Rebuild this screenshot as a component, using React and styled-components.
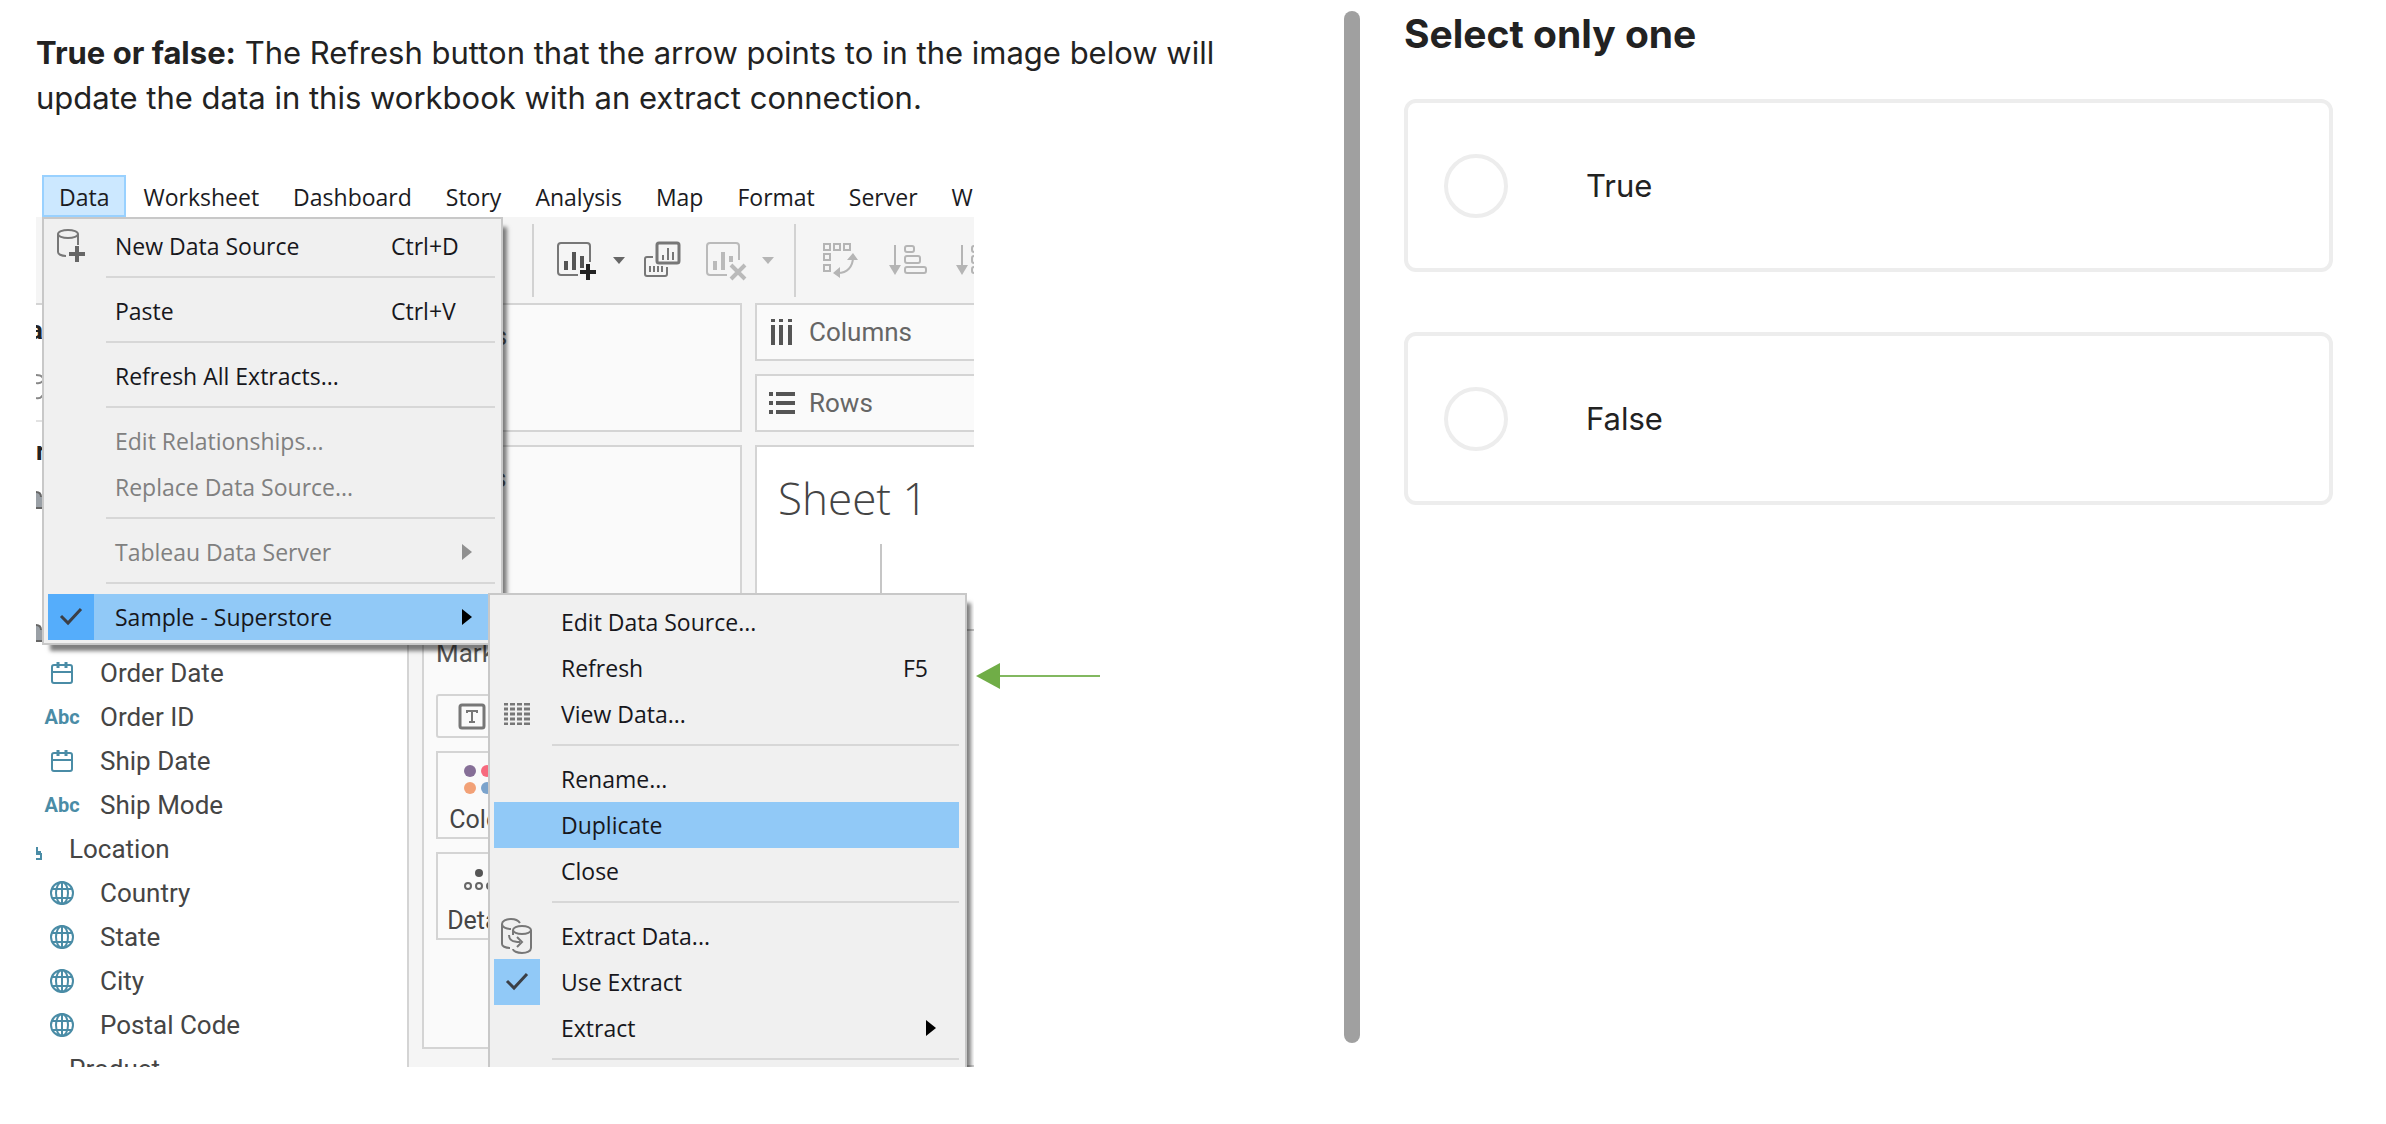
import React, { useState } from "react";
import styled, { createGlobalStyle } from "styled-components";

const GlobalStyle = createGlobalStyle`
  *, *::before, *::after { box-sizing: border-box; }
  body {
    margin: 0;
    background: #fff;
    color: #222;
    font-family: Inter, "Liberation Sans", sans-serif;
  }
`;

/* ---------- Page ---------- */

const Page = styled.main`
  display: grid;
  grid-template-columns: minmax(0, 1344fr) 16px minmax(0, 1026fr);
  min-height: 100vh;
`;

const Question = styled.section`
  padding: 30px 84px 30px 36px;
`;

const Prompt = styled.p`
  margin: 0 0 55px;
  font-size: 31px;
  line-height: 45px;
`;

const Divider = styled.div`
  margin: 11px 0 81px;
  border-radius: 8px;
  background: #a0a0a0;
`;

const Answers = styled.form`
  padding: 10px 53px 30px 44px;
`;

const Title = styled.h2`
  margin: 0 0 41px;
  font-size: 39px;
  line-height: 48px;
  font-weight: 700;
`;

const Options = styled.div`
  display: flex;
  flex-direction: column;
  gap: 60px;
`;

const Option = styled.label`
  display: flex;
  align-items: center;
  gap: 78px;
  min-height: 173px;
  padding: 0 36px;
  border: 4px solid #ededed;
  border-radius: 12px;
  font-size: 31px;
  line-height: 45px;
  cursor: pointer;
`;

const Radio = styled.input`
  appearance: none;
  flex: none;
  width: 64px;
  height: 64px;
  margin: 0;
  border: 4px solid #ededed;
  border-radius: 50%;
  background: #fff;
  &:checked { border: 18px solid #222; }
`;

/* ---------- Figure ---------- */

const Figure = styled.figure`
  display: flex;
  align-items: flex-start;
  gap: 2px;
  margin: 0;
`;

const Workbook = styled.div`
  position: relative;
  display: flex;
  flex-direction: column;
  flex: none;
  width: 938px;
  height: 892px;
  overflow: hidden;
  background: #fff;
`;

const Pointer = styled.svg`
  flex: none;
  margin-top: 488px;
`;

const MenuBar = styled.nav`
  display: flex;
  flex: none;
  height: 42px;
  padding-left: 6px;
`;

const MenuTab = styled.button`
  flex: none;
  height: 42px;
  padding: 0 15px;
  border: 2px solid ${(p) => (p.$open ? "#99d1ff" : "transparent")};
  background: ${(p) => (p.$open ? "#cce8ff" : "transparent")};
  color: #1b1b22;
  font: 500 23px/40px "Open Sans", "Noto Sans", sans-serif;
`;

const Toolbar = styled.div`
  display: flex;
  align-items: center;
  flex: none;
  height: 86px;
  padding-left: 462px;
  background: #f5f5f5;
`;

const ToolRule = styled.span`
  flex: none;
  width: 2px;
  height: 73px;
  margin: 0 ${(p) => p.$right}px 0 ${(p) => p.$left}px;
  background: #d2d2d2;
`;

const ToolIcon = styled.button`
  display: flex;
  flex: none;
  margin-right: ${(p) => p.$right}px;
  padding: 0;
  border: 0;
  background: none;
`;

const Body = styled.div`
  display: flex;
  flex: 1;
  min-height: 0;
  background: #f5f5f5;
`;

const DataPane = styled.div`
  flex: none;
  width: 373px;
  border-top: 2px solid #d4d4d4;
  border-right: 2px solid #d4d4d4;
  background: #fff;
`;

const Edge = styled.div`
  display: flex;
  flex-direction: column;
  width: 7px;
  height: 346px;
`;

const EdgeRow = styled.div`
  display: flex;
  flex: none;
  align-items: center;
  justify-content: ${(p) => (p.$end ? "flex-end" : "flex-start")};
  height: ${(p) => p.$height}px;
  overflow: hidden;
  border-bottom: ${(p) => (p.$rule ? "2px solid #e2e2e2" : "0")};
  color: #222;
  font: 700 26px/32px Roboto, sans-serif;
`;

const FieldList = styled.ul`
  margin: 0;
  padding: 0;
  list-style: none;
`;

const Field = styled.li`
  display: flex;
  align-items: center;
  height: 44px;
  color: #454545;
  font: 26px/32px Roboto, sans-serif;
`;

const FieldIcon = styled.span`
  display: flex;
  flex: none;
  justify-content: ${(p) => (p.$folder ? "flex-start" : "center")};
  width: ${(p) => (p.$folder ? 33 : 52)}px;
  margin-right: ${(p) => (p.$folder ? 0 : 12)}px;
`;

const Abc = styled.span`
  color: #4a8ca6;
  font: 700 20px/32px Roboto, sans-serif;
`;

const CardColumn = styled.div`
  display: flex;
  flex: none;
  flex-direction: column;
  gap: 13px;
  width: 333px;
  padding-left: 13px;
`;

const Card = styled.div`
  flex: none;
  height: ${(p) => p.$height}px;
  padding: ${(p) => p.$pad || "0"};
  border: 2px solid #d4d4d4;
  background: #fafafa;
  color: #555;
  font: 26px/32px Roboto, sans-serif;
`;

const MarkGrid = styled.div`
  display: flex;
  flex-direction: column;
  align-items: flex-start;
  gap: 13px;
  margin-top: 25px;
`;

const MarkBox = styled.button`
  display: flex;
  flex-direction: column;
  align-items: ${(p) => (p.$type ? "flex-start" : "center")};
  justify-content: ${(p) => (p.$type ? "center" : "flex-end")};
  gap: 7px;
  width: ${(p) => (p.$type ? 290 : 86)}px;
  height: ${(p) => (p.$type ? 44 : 88)}px;
  padding: 0 ${(p) => (p.$type ? 20 : 0)}px;
  border: 2px solid #d4d4d4;
  border-radius: ${(p) => (p.$type ? 3 : 0)}px;
  background: #fafafa;
  color: #454545;
  font: 25px/34px Roboto, sans-serif;
`;

const Shelves = styled.div`
  display: flex;
  flex: 1;
  flex-direction: column;
  gap: 13px;
  min-width: 0;
  padding-left: 13px;
`;

const Shelf = styled.div`
  display: flex;
  flex: none;
  align-items: center;
  gap: 14px;
  height: 58px;
  padding-left: 12px;
  border: 2px solid #d4d4d4;
  border-right: 0;
  background: #fafafa;
  color: #666;
  font: 26px/32px Roboto, sans-serif;
`;

const Sheet = styled.div`
  flex: 1;
  padding: 23px 0 0 21px;
  border: 2px solid #d4d4d4;
  border-right: 0;
  background: #fff;
`;

const SheetTitle = styled.h3`
  margin: 0;
  color: #444;
  font: 300 44px/56px "Open Sans", "Noto Sans", sans-serif;
`;

const Axis = styled.div`
  width: 104px;
  height: 85px;
  margin-top: 18px;
  border-right: 2px solid #c6c6c6;
`;

const AxisRule = styled.div`
  height: 2px;
  background: #c6c6c6;
`;

/* ---------- Drop-down menus ---------- */

const Menu = styled.div`
  position: absolute;
  left: ${(p) => p.$x}px;
  top: ${(p) => p.$y}px;
  width: ${(p) => p.$width}px;
  padding: 4px 6px 3px 4px;
  border: 2px solid #c8c8c8;
  background: #f0f0f0;
  box-shadow: 6px 8px 4px -2px rgba(0, 0, 0, 0.5);
`;

const MenuItem = styled.button`
  display: flex;
  align-items: center;
  width: 100%;
  height: 46px;
  padding: 0;
  border: 0;
  background: ${(p) => (p.$active ? "#91c9f7" : "transparent")};
  color: ${(p) => (p.$dim ? "#808080" : "#17171c")};
  font: 500 23px/46px "Open Sans", "Noto Sans", sans-serif;
  text-align: left;
`;

const Gutter = styled.span`
  display: flex;
  flex: none;
  align-items: center;
  justify-content: center;
  width: 46px;
  height: 46px;
  margin-right: 21px;
  background: ${(p) => p.$fill || "transparent"};
`;

const ItemText = styled.span`
  flex: 1;
  white-space: nowrap;
`;

const Shortcut = styled.span`
  flex: none;
  width: ${(p) => p.$width}px;
`;

const SubArrow = styled.svg`
  flex: none;
  margin-right: 23px;
`;

const Rule = styled.hr`
  height: 2px;
  margin: 7px 0 10px 58px;
  border: 0;
  background: #d7d7d7;
`;

/* ---------- Icons ---------- */

const Check = () => (
  <svg width="24" height="20" viewBox="0 0 24 20" fill="none" stroke="#3b3f46" strokeWidth="3">
    <path d="M2 9l7 7L22 2" />
  </svg>
);

const NewSource = () => (
  <svg width="30" height="36" viewBox="0 0 30 36" fill="none" stroke="#777" strokeWidth="2">
    <ellipse cx="12" cy="6" rx="10" ry="4" />
    <path d="M2 6v18c0 2 3 4 8 4M22 6v11" />
    <path d="M21 18v16M13 26h16" stroke="#666" strokeWidth="4" />
  </svg>
);

const ViewData = () => (
  <svg width="26" height="22" viewBox="0 0 26 22" fill="none" stroke="#777" strokeWidth="3">
    {[1, 6, 11, 16, 21].map((y) => (
      <path key={y} d={`M0 ${y}h4M6 ${y}h5M13 ${y}h5M20 ${y}h6`} />
    ))}
  </svg>
);

const ExtractIcon = () => (
  <svg width="32" height="36" viewBox="0 0 32 36" fill="none" stroke="#777" strokeWidth="2">
    <path d="M19 5C17 2 13 1 10 1 5 1 1 3 1 6v20c0 2 3 4 8 4M1 6c0 3 4 5 9 5" />
    <ellipse cx="21" cy="12" rx="9" ry="4" />
    <path d="M30 12v18c0 3-4 5-9 5s-9-2-9-4M12 12v5M8 17c0 5 3 7 11 7" />
    <path d="M16 19l5 5-5 5" />
  </svg>
);

const Triangle = ({ color }) => (
  <SubArrow width="10" height="16" viewBox="0 0 10 16">
    <path d="M0 0l10 8-10 8z" fill={color} />
  </SubArrow>
);

const Caret = ({ color }) => (
  <svg width="12" height="7" viewBox="0 0 12 7">
    <path d="M0 0h12L6 7z" fill={color} />
  </svg>
);

const NewSheet = () => (
  <svg width="42" height="42" viewBox="0 0 42 42" fill="none" stroke="#777" strokeWidth="2">
    <path d="M22 36H5q-3 0-3-3V7q0-3 3-3h26q3 0 3 3v16" />
    <path d="M10 22v9M18 13v18M26 17v12" stroke="#555" strokeWidth="4" />
    <path d="M32 25v16M24 33h16" stroke="#222" strokeWidth="4" />
  </svg>
);

const CopySheet = () => (
  <svg width="38" height="38" viewBox="0 0 38 38" fill="none" stroke="#777" strokeWidth="2">
    <rect x="14" y="2" width="22" height="20" rx="2" strokeWidth="3" />
    <path d="M10 16H4q-2 0-2 2v15q0 2 2 2h18q2 0 2-2v-7" />
    <path d="M20 14v5M25 7v12M30 11v8" />
    <path d="M7 25v6M11 25v6M15 25v6M19 25v6" />
  </svg>
);

const ClearSheet = () => (
  <svg width="42" height="42" viewBox="0 0 42 42" fill="none" stroke="#bababa" strokeWidth="2">
    <path d="M22 36H5q-3 0-3-3V7q0-3 3-3h26q3 0 3 3v14" />
    <path d="M10 22v9M18 13v18M26 17v6" strokeWidth="4" />
    <path d="M26 26l14 14M40 26L26 40" strokeWidth="4" />
  </svg>
);

const SwapIcon = () => (
  <svg width="36" height="38" viewBox="0 0 36 38" fill="none" stroke="#b5b5b5" strokeWidth="2">
    <rect x="2" y="3" width="6" height="6" />
    <rect x="12" y="3" width="6" height="6" />
    <rect x="22" y="3" width="6" height="6" />
    <rect x="2" y="13" width="6" height="6" />
    <rect x="2" y="24" width="6" height="6" />
    <path d="M16 32c9 0 15-6 15-16" />
    <path d="M11 32l7-6v11zM31 12l-6 7h11z" fill="#b5b5b5" stroke="none" />
  </svg>
);

const SortIcon = () => (
  <svg width="38" height="32" viewBox="0 0 38 32" fill="none" stroke="#b5b5b5" strokeWidth="2">
    <path d="M6 1v22" />
    <path d="M0 21h12L6 31z" fill="#b5b5b5" stroke="none" />
    <rect x="16" y="2" width="9" height="6" rx="2" />
    <rect x="16" y="12" width="15" height="7" rx="2" />
    <rect x="16" y="23" width="21" height="6" rx="2" />
  </svg>
);

const ColumnsIcon = () => (
  <svg width="26" height="26" viewBox="0 0 26 26" fill="#555">
    {[2, 10, 19].map((x) => (
      <path key={x} d={`M${x} 0h4v3h-4zM${x} 6h4v20h-4z`} />
    ))}
  </svg>
);

const RowsIcon = () => (
  <svg width="26" height="22" viewBox="0 0 26 22" fill="#555">
    {[0, 9, 18].map((y) => (
      <path key={y} d={`M0 ${y}h4v4H0zM7 ${y}h19v4H7z`} />
    ))}
  </svg>
);

const Calendar = () => (
  <svg width="22" height="24" viewBox="0 0 22 24" fill="none" stroke="#4a8ca6" strokeWidth="2">
    <rect x="1" y="4" width="20" height="18" rx="2" />
    <path d="M1 11h20" />
    <path d="M7 1v6M15 1v6" strokeWidth="3" />
  </svg>
);

const Globe = () => (
  <svg width="24" height="24" viewBox="0 0 24 24" fill="none" stroke="#4a8ca6" strokeWidth="2">
    <circle cx="12" cy="12" r="11" />
    <ellipse cx="12" cy="12" rx="6" ry="11" />
    <path d="M12 1v22M2 8h20M2 17h20" />
  </svg>
);

const Hierarchy = () => (
  <svg width="7" height="24" viewBox="0 0 7 24" fill="none" stroke="#4a8ca6" strokeWidth="2">
    <path d="M1 10v5h4M0 17h5v5H0" />
  </svg>
);

const Drum = () => (
  <svg width="7" height="20" viewBox="0 0 7 20">
    <path d="M0 3c4 0 5 2 5 5h2v11H0z" fill="#9aa0a6" />
    <path d="M0 3c4 0 5 2 5 5M0 19h7" fill="none" stroke="#666" strokeWidth="2" />
  </svg>
);

const SearchEdge = () => (
  <svg width="7" height="30" viewBox="0 0 7 30" fill="none" stroke="#888" strokeWidth="2">
    <path d="M0 3c3 0 6 1 7 3M0 11c3 1 5 0 7-2M0 26c3 1 5 0 7-3" />
  </svg>
);

const LabelIcon = () => (
  <svg width="28" height="27" viewBox="0 0 28 27" fill="none" stroke="#777" strokeWidth="3">
    <rect x="2" y="2" width="24" height="23" rx="2" />
    <path d="M9 10V8h10v2M14 8v11M11 19h6" strokeWidth="2" />
  </svg>
);

const ColorDots = () => (
  <svg width="34" height="32" viewBox="0 0 34 32">
    <circle cx="8" cy="7" r="6" fill="#866f97" />
    <circle cx="25" cy="7" r="6" fill="#f76a7e" />
    <circle cx="8" cy="24" r="6" fill="#f2a177" />
    <circle cx="25" cy="24" r="6" fill="#7ba3cc" />
  </svg>
);

const DetailDots = () => (
  <svg width="30" height="32" viewBox="0 0 30 32" fill="none" stroke="#666" strokeWidth="2">
    <circle cx="15" cy="8" r="4" fill="#555" stroke="none" />
    <circle cx="4" cy="21" r="3" />
    <circle cx="15" cy="21" r="3" />
    <circle cx="26" cy="21" r="3" />
  </svg>
);

/* ---------- Content ---------- */

const TABS = ["Data", "Worksheet", "Dashboard", "Story", "Analysis", "Map", "Format", "Server", "W"];

const FIELDS = [
  ["Order Date", "date"],
  ["Order ID", "text"],
  ["Ship Date", "date"],
  ["Ship Mode", "text"],
  ["Location", "folder"],
  ["Country", "geo"],
  ["State", "geo"],
  ["City", "geo"],
  ["Postal Code", "geo"],
  ["Product", "group"],
];

const FIELD_ICONS = { date: <Calendar />, text: <Abc>Abc</Abc>, geo: <Globe />, folder: <Hierarchy />, group: null };

const DATA_MENU = [
  { text: "New Data Source", icon: <NewSource />, keys: "Ctrl+D" },
  null,
  { text: "Paste", keys: "Ctrl+V" },
  null,
  { text: "Refresh All Extracts..." },
  null,
  { text: "Edit Relationships...", dim: true },
  { text: "Replace Data Source...", dim: true },
  null,
  { text: "Tableau Data Server", dim: true, sub: true },
  null,
  { text: "Sample - Superstore", icon: <Check />, fill: "#55adfb", active: true, sub: true },
];

const SOURCE_MENU = [
  { text: "Edit Data Source..." },
  { text: "Refresh", keys: "F5" },
  { text: "View Data...", icon: <ViewData /> },
  null,
  { text: "Rename..." },
  { text: "Duplicate", active: true },
  { text: "Close" },
  null,
  { text: "Extract Data...", icon: <ExtractIcon /> },
  { text: "Use Extract", icon: <Check />, fill: "#91c9f7" },
  { text: "Extract", sub: true },
  null,
];

function DropDown({ items, keyWidth, ...place }) {
  return (
    <Menu {...place}>
      {items.map((item, i) =>
        item ? (
          <MenuItem key={i} type="button" $dim={item.dim} $active={item.active}>
            <Gutter $fill={item.fill}>{item.icon}</Gutter>
            <ItemText>{item.text}</ItemText>
            {item.keys && <Shortcut $width={keyWidth}>{item.keys}</Shortcut>}
            {item.sub && <Triangle color={item.dim ? "#909090" : "#000"} />}
          </MenuItem>
        ) : (
          <Rule key={i} />
        )
      )}
    </Menu>
  );
}

function WorkbookFigure() {
  return (
    <Figure>
      <Workbook>
        <MenuBar>
          {TABS.map((tab) => (
            <MenuTab key={tab} type="button" $open={tab === "Data"}>{tab}</MenuTab>
          ))}
        </MenuBar>
        <Toolbar>
          <Caret color="#888" />
          <ToolRule $left={34} $right={22} />
          <ToolIcon type="button" aria-label="New worksheet" $right={15}><NewSheet /></ToolIcon>
          <ToolIcon type="button" aria-label="New worksheet options" $right={18}><Caret color="#666" /></ToolIcon>
          <ToolIcon type="button" aria-label="Duplicate sheet" $right={24}><CopySheet /></ToolIcon>
          <ToolIcon type="button" aria-label="Clear sheet" $right={15}><ClearSheet /></ToolIcon>
          <ToolIcon type="button" aria-label="Clear sheet options" $right={0}><Caret color="#b5b5b5" /></ToolIcon>
          <ToolRule $left={20} $right={26} />
          <ToolIcon type="button" aria-label="Swap rows and columns" $right={31}><SwapIcon /></ToolIcon>
          <ToolIcon type="button" aria-label="Sort ascending" $right={29}><SortIcon /></ToolIcon>
          <ToolIcon type="button" aria-label="Sort descending" $right={0}><SortIcon /></ToolIcon>
        </Toolbar>
        <Body>
          <DataPane>
            <Edge>
              <EdgeRow $height={49} $end>a</EdgeRow>
              <EdgeRow $height={68} $rule><SearchEdge /></EdgeRow>
              <EdgeRow $height={58}>r</EdgeRow>
              <EdgeRow $height={38}><Drum /></EdgeRow>
              <EdgeRow $height={98} />
              <EdgeRow $height={32}><Drum /></EdgeRow>
            </Edge>
            <FieldList>
              {FIELDS.map(([name, kind]) => (
                <Field key={name}>
                  <FieldIcon $folder={kind === "folder" || kind === "group"}>{FIELD_ICONS[kind]}</FieldIcon>
                  {name}
                </Field>
              ))}
            </FieldList>
          </DataPane>
          <CardColumn>
            <Card $height={129} $pad="15px 11px">Pages</Card>
            <Card $height={171} $pad="15px 11px">Filters</Card>
            <Card $height={420} $pad="6px 12px">
              Marks
              <MarkGrid>
                <MarkBox type="button" $type aria-label="Mark type"><LabelIcon /></MarkBox>
                <MarkBox type="button"><ColorDots />Color</MarkBox>
                <MarkBox type="button"><DetailDots />Detail</MarkBox>
              </MarkGrid>
            </Card>
          </CardColumn>
          <Shelves>
            <Shelf><ColumnsIcon />Columns</Shelf>
            <Shelf><RowsIcon />Rows</Shelf>
            <Sheet>
              <SheetTitle>Sheet 1</SheetTitle>
              <Axis />
              <AxisRule />
            </Sheet>
          </Shelves>
        </Body>
        <DropDown items={DATA_MENU} keyWidth={104} $x={6} $y={42} $width={461} />
        <DropDown items={SOURCE_MENU} keyWidth={56} $x={452} $y={418} $width={479} />
      </Workbook>
      <Pointer width="124" height="26" viewBox="0 0 124 26">
        <path d="M24 13h100" stroke="#82b860" strokeWidth="2" />
        <path d="M0 13L24 0v26z" fill="#70ad47" />
      </Pointer>
    </Figure>
  );
}

export default function App() {
  const [answer, setAnswer] = useState("");
  return (
    <>
      <GlobalStyle />
      <Page>
        <Question>
          <Prompt>
            <strong>True or false:</strong> The Refresh button that the arrow points to in the image below will update
            the data in this workbook with an extract connection.
          </Prompt>
          <WorkbookFigure />
        </Question>
        <Divider />
        <Answers>
          <Title>Select only one</Title>
          <Options role="radiogroup" aria-label="Select only one">
            {["True", "False"].map((value) => (
              <Option key={value} htmlFor={`answer-${value}`}>
                <Radio
                  id={`answer-${value}`}
                  type="radio"
                  name="answer"
                  value={value}
                  checked={answer === value}
                  onChange={() => setAnswer(value)}
                />
                {value}
              </Option>
            ))}
          </Options>
        </Answers>
      </Page>
    </>
  );
}
